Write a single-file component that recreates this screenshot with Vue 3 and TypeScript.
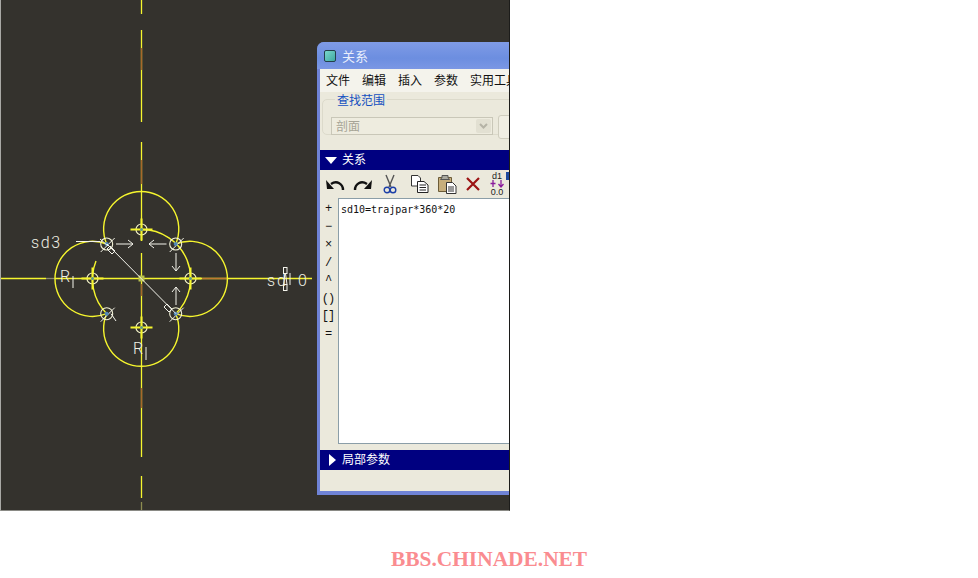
<script setup lang="ts">
const axisColor = "#f6f62e";
const rustColor = "#a8682a";

const segments = [
  // vertical axis
  { x1: 141.5, y1: 0, x2: 141.5, y2: 14, c: axisColor },
  { x1: 141.5, y1: 30, x2: 141.5, y2: 122, c: axisColor },
  { x1: 141.5, y1: 48, x2: 141.5, y2: 70, c: rustColor },
  { x1: 141.5, y1: 142, x2: 141.5, y2: 241, c: axisColor },
  { x1: 141.5, y1: 160, x2: 141.5, y2: 184, c: rustColor },
  { x1: 141.5, y1: 253, x2: 141.5, y2: 457, c: axisColor },
  { x1: 141.5, y1: 284, x2: 141.5, y2: 296, c: rustColor },
  { x1: 141.5, y1: 388, x2: 141.5, y2: 408, c: rustColor },
  { x1: 141.5, y1: 476, x2: 141.5, y2: 498, c: axisColor },
  { x1: 141.5, y1: 502, x2: 141.5, y2: 511, c: "#8d8d50" },
  // horizontal axis
  { x1: 1, y1: 278.5, x2: 46, y2: 278.5, c: axisColor },
  { x1: 46, y1: 278.5, x2: 55, y2: 278.5, c: "#8b8a70" },
  { x1: 55, y1: 278.5, x2: 312, y2: 278.5, c: axisColor },
  { x1: 202, y1: 278.5, x2: 227, y2: 278.5, c: "#c07a30" },
  { x1: 92, y1: 278.5, x2: 103, y2: 278.5, c: "#c07a30" },
];

const pivots = [
  { x: 141.5, y: 229.5 },
  { x: 92.5, y: 278.5 },
  { x: 190.5, y: 278.5 },
  { x: 141.5, y: 327.5 },
];

const corners = [
  { x: 106.7, y: 244 },
  { x: 175.7, y: 244 },
  { x: 106.7, y: 313.7 },
  { x: 175.7, y: 313.7 },
];

const menus = ["文件", "编辑", "插入", "参数", "实用工具"];
const ops = ["+", "−", "×", "/", "^", "()", "[]", "="];
</script>

<template>
  <div class="page">
    <div class="shot">
      <svg class="sketch" width="509" height="511" viewBox="0 0 509 511">
        <line
          v-for="(s, i) in segments"
          :key="i"
          :x1="s.x1"
          :y1="s.y1"
          :x2="s.x2"
          :y2="s.y2"
          :stroke="s.c"
          stroke-width="1.3"
        />

        <g fill="none" stroke="#f6f62e" stroke-width="1.4">
          <path d="M106.7 244A37.6 37.6 0 1 1 175.7 244" />
          <path d="M175.7 244A37.6 37.6 0 1 1 175.7 313.7" />
          <path d="M175.7 313.7A37.6 37.6 0 1 1 106.7 313.7" />
          <path d="M106.7 313.7A37.6 37.6 0 1 1 106.7 244" />
          <path d="M141.5 229.5A49 49 0 0 1 175.7 313.7" />
          <path d="M96 261A49 49 0 0 0 106.7 313.7" />
        </g>

        <rect x="138.5" y="275.5" width="6" height="6" fill="#b8c050" />

        <g v-for="p in pivots" :key="p.x + '-' + p.y">
          <circle :cx="p.x" :cy="p.y" r="5.5" fill="none" stroke="#f4f4c8" stroke-width="1.2" />
          <path
            :d="`M${p.x - 11} ${p.y}H${p.x + 11}M${p.x} ${p.y - 11}V${p.y + 11}`"
            stroke="#f6f62e"
            stroke-width="2"
          />
          <circle :cx="p.x" :cy="p.y" r="1.5" fill="#5c9a8c" />
        </g>

        <g v-for="c in corners" :key="c.x + '-' + c.y">
          <circle :cx="c.x" :cy="c.y" r="6" fill="none" stroke="#f4f4d8" stroke-width="1.1" />
          <path
            :d="`M${c.x - 6} ${c.y + 8}L${c.x + 8} ${c.y - 6}`"
            stroke="#f4f4e8"
            stroke-width="1"
          />
          <circle :cx="c.x" :cy="c.y" r="2" fill="#4f86b8" />
        </g>

        <g fill="none" stroke="#f4f4ec" stroke-width="1">
          <path d="M107 244L176 313.7" />
          <path d="M116 244H133M128 240L133 244L128 248" />
          <path d="M166.5 244H149M154 240L149 244L154 248" />
          <path d="M176 253V271M172 266L176 271L180 266" />
          <path d="M176 305V287M172 292L176 287L180 292" />
          <path d="M76 241.5H100" />
          <path d="M73 276V288M146 347V360" />
          <path d="M111 313.7L116 321M100 239L108 246" />
          <path d="M167 304L172 309L169 312L164 307Z" />
          <path d="M110 246L115 251L112 254L107 249Z" />
          <rect x="283.5" y="267.5" width="3.5" height="6" />
          <rect x="283.5" y="284.5" width="3.5" height="6" />
          <path d="M285 273.5L283.5 284.5M285.5 273.5L287 284.5M290 273V285" />
        </g>

        <g class="dim">
          <text x="31" y="248" textLength="29">sd3</text>
          <text x="60" y="282">R</text>
          <text x="133" y="354">R</text>
          <text x="267" y="286">s</text>
          <text x="277" y="286">d</text>
          <text x="298" y="286">0</text>
        </g>
      </svg>

      <section class="window">
        <header class="title">
          <span class="app-icon"></span>
          <span>关系</span>
        </header>

        <nav class="menu">
          <span v-for="m in menus" :key="m">{{ m }}</span>
        </nav>

        <fieldset class="search">
          <legend>查找范围</legend>
          <div class="search-row">
            <div class="combo">
              <span class="combo-text">剖面</span>
              <span class="combo-btn">
                <svg width="9" height="6" viewBox="0 0 9 6">
                  <path d="M1 1L4.5 4.5L8 1" fill="none" stroke="#b5b3a6" stroke-width="2" />
                </svg>
              </span>
            </div>
            <span class="side-btn"></span>
          </div>
        </fieldset>

        <div class="band">
          <svg width="12" height="7" viewBox="0 0 12 7"><path d="M0 0H12L6 7Z" fill="#fff" /></svg>
          <span class="band-text">关系</span>
        </div>

        <div class="toolbar">
          <svg width="20" height="16" viewBox="0 0 20 16">
            <path d="M18 14C18 8 12 4 6 8" fill="none" stroke="#111" stroke-width="2.4" />
            <path d="M1 4L9 13L2 13Z" fill="#111" />
          </svg>
          <svg width="20" height="16" viewBox="0 0 20 16">
            <path d="M2 14C2 8 8 4 14 8" fill="none" stroke="#111" stroke-width="2.4" />
            <path d="M19 4L11 13L18 13Z" fill="#111" />
          </svg>
          <svg class="t-cut" width="14" height="20" viewBox="0 0 14 20">
            <path d="M3 1L8 13M11 1L6 13" stroke="#555" stroke-width="1.4" />
            <circle cx="4" cy="16" r="2.8" fill="none" stroke="#1c3fa8" stroke-width="1.4" />
            <circle cx="10" cy="16" r="2.8" fill="none" stroke="#1c3fa8" stroke-width="1.4" />
          </svg>
          <svg class="t-copy" width="19" height="18" viewBox="0 0 19 18">
            <path d="M1.5 .5H8L10.5 3V11H1.5Z" fill="#fff" stroke="#333" />
            <path d="M7.5 6.5H14L18 10V17.5H7.5Z" fill="#fff" stroke="#222" />
            <path d="M9.5 10H16M9.5 12.5H16M9.5 15H16" stroke="#222" />
          </svg>
          <svg width="20" height="20" viewBox="0 0 20 20">
            <path d="M1.5 3.5H14.5V17.5H1.5Z" fill="#c6ae7c" stroke="#6c5c38" />
            <path d="M5 3.5V1.5H11V3.5L12.5 5.5H3.5Z" fill="#a9a9a0" stroke="#555" />
            <path d="M9.5 8.5H15.5L19 12V19.5H9.5Z" fill="#fff" stroke="#333" />
            <path d="M11 13H17M11 15H17M11 17H17" stroke="#333" />
          </svg>
          <svg class="t-del" width="14" height="14" viewBox="0 0 14 14">
            <path d="M1 1L13 13M13 1L1 13" stroke="#9c1414" stroke-width="2.2" />
          </svg>
          <div class="d-icon">
            <span>d1</span>
            <svg width="14" height="8" viewBox="0 0 14 8">
              <path d="M3 0V7M0.5 3.5H5.5M11 0V7M8.5 4L11 7L13.5 4" fill="none" stroke="#8a1c9c" stroke-width="1.3" />
            </svg>
            <span>0.0</span>
          </div>
          <span class="d-mark"></span>
        </div>

        <div class="editor">
          <div class="ops">
            <span v-for="o in ops" :key="o">{{ o }}</span>
          </div>
          <div class="text-box">sd10=trajpar*360*20</div>
        </div>

        <div class="band band-low">
          <svg width="7" height="12" viewBox="0 0 7 12"><path d="M0 0V12L7 6Z" fill="#fff" /></svg>
          <span class="band-text">局部参数</span>
        </div>
        <div class="foot"></div>
      </section>
    </div>

    <div class="mark">BBS.CHINADE.NET</div>
  </div>
</template>

<style>
html,
body {
  margin: 0;
  background: #fff;
}
</style>

<style scoped>
.page {
  width: 978px;
  height: 578px;
  overflow: hidden;
  background: #fff;
}

.shot {
  position: relative;
  width: 510px;
  height: 511px;
  overflow: hidden;
  background: #34322d;
  border-left: 1px solid #a9a9a5;
  border-right: 1px solid #1c1c1a;
  border-bottom: 1px solid #8a8a85;
  box-sizing: border-box;
}

.sketch {
  position: absolute;
  left: -1px;
  top: 0;
}

.dim text {
  font-family: Roboto, "Liberation Sans", sans-serif;
  font-weight: 300;
  font-size: 16px;
  fill: #f0f0e4;
}

.window {
  position: absolute;
  left: 316px;
  top: 42px;
  width: 300px;
  height: 453px;
  display: flex;
  flex-direction: column;
  box-sizing: border-box;
  padding: 0 3px 4px;
  background: #6f83d6;
  border-radius: 7px 7px 0 0;
  font-family: "Noto Sans CJK SC", "Liberation Sans", sans-serif;
  font-size: 12px;
  color: #111;
}

.title {
  height: 27px;
  flex: none;
  margin: 0 -3px;
  padding: 0 0 0 7px;
  display: flex;
  align-items: center;
  gap: 6px;
  border-radius: 7px 7px 0 0;
  background: linear-gradient(#7f9be6, #6c8ee0 60%, #7b97e4);
  color: #e8eefc;
  font-size: 13px;
}

.app-icon {
  width: 10px;
  height: 10px;
  background: linear-gradient(135deg, #7ad8cc, #3fa8a0);
  border: 1px solid #24404a;
  border-radius: 2px;
}

.menu {
  height: 23px;
  display: flex;
  align-items: center;
  gap: 12px;
  padding: 0 0 2px 6px;
  box-sizing: border-box;
  background: #f4f3ec;
  white-space: nowrap;
  flex: none;
}

.search {
  margin: 0;
  height: 58px;
  flex: none;
  box-sizing: border-box;
  padding: 0;
  background: #ebe9dc;
  border: 0;
  position: relative;
}

.search::before {
  content: "";
  position: absolute;
  left: 2px;
  top: 7px;
  right: 0;
  bottom: 4px;
  border: 1px solid #dcdacb;
  border-radius: 5px;
}

.search legend {
  position: absolute;
  left: 15px;
  top: 0;
  padding: 0 2px;
  line-height: 15px;
  color: #1450c0;
  background: #ebe9dc;
}

.search-row {
  position: relative;
  display: flex;
  gap: 5px;
  padding: 25px 0 0 11px;
}

.combo {
  width: 162px;
  height: 18px;
  box-sizing: border-box;
  display: flex;
  align-items: center;
  justify-content: space-between;
  padding: 0 1px 0 4px;
  border: 1px solid #c9c7b8;
  background: #eeecdf;
  color: #a6a496;
}

.combo-text {
  margin-top: -2px;
}

.combo-btn {
  width: 15px;
  height: 14px;
  display: flex;
  align-items: center;
  justify-content: center;
  background: #e2e0d2;
  border-radius: 2px;
}

.side-btn {
  width: 60px;
  height: 22px;
  margin-top: -2px;
  border: 1px solid #cfcdbe;
  border-radius: 3px;
  background: #f0eee3;
}

.band {
  height: 20px;
  flex: none;
  display: flex;
  align-items: center;
  gap: 5px;
  padding-left: 5px;
  background: #000080;
  color: #fff;
}

.band-text {
  margin-top: -3px;
}

.band-low {
  gap: 6px;
  padding-left: 9px;
}

.toolbar {
  position: relative;
  height: 28px;
  flex: none;
  display: flex;
  align-items: center;
  padding-left: 5px;
  gap: 8px;
  background: #ebe9dc;
}

.t-cut {
  margin-left: 2px;
}

.t-copy {
  margin-left: 5px;
}

.t-del {
  margin-left: 1px;
}

.d-icon {
  display: flex;
  flex-direction: column;
  align-items: center;
  margin-left: 2px;
  width: 14px;
  font-family: "Liberation Sans", sans-serif;
  font-size: 9px;
  line-height: 8px;
  color: #222;
}

.d-mark {
  position: absolute;
  left: 186px;
  top: 2px;
  width: 5px;
  height: 8px;
  background: #1c4aa0;
}

.editor {
  flex: 1;
  display: flex;
  background: #ebe9dc;
  padding-bottom: 6px;
}

.ops {
  width: 18px;
  flex: none;
  display: flex;
  flex-direction: column;
  align-items: center;
  padding: 3px 2px 0 0;
  box-sizing: border-box;
  font-family: "Liberation Mono", monospace;
  font-size: 12px;
  line-height: 17.9px;
  white-space: nowrap;
}

.ops span {
  letter-spacing: -1px;
}

.text-box {
  flex: 1;
  box-sizing: border-box;
  padding: 4px 0 0 2px;
  background: #fff;
  border: 1px solid #8b9ea8;
  font-family: "DejaVu Sans Mono", monospace;
  font-size: 10px;
  line-height: 14px;
  color: #111;
}

.foot {
  height: 21px;
  flex: none;
  background: #ebe9dc;
}

.mark {
  margin: 37px 0 0 391px;
  font-family: "Liberation Serif", serif;
  font-weight: bold;
  font-size: 21.4px;
  line-height: 23px;
  color: #fa8c90;
  white-space: nowrap;
}
</style>
